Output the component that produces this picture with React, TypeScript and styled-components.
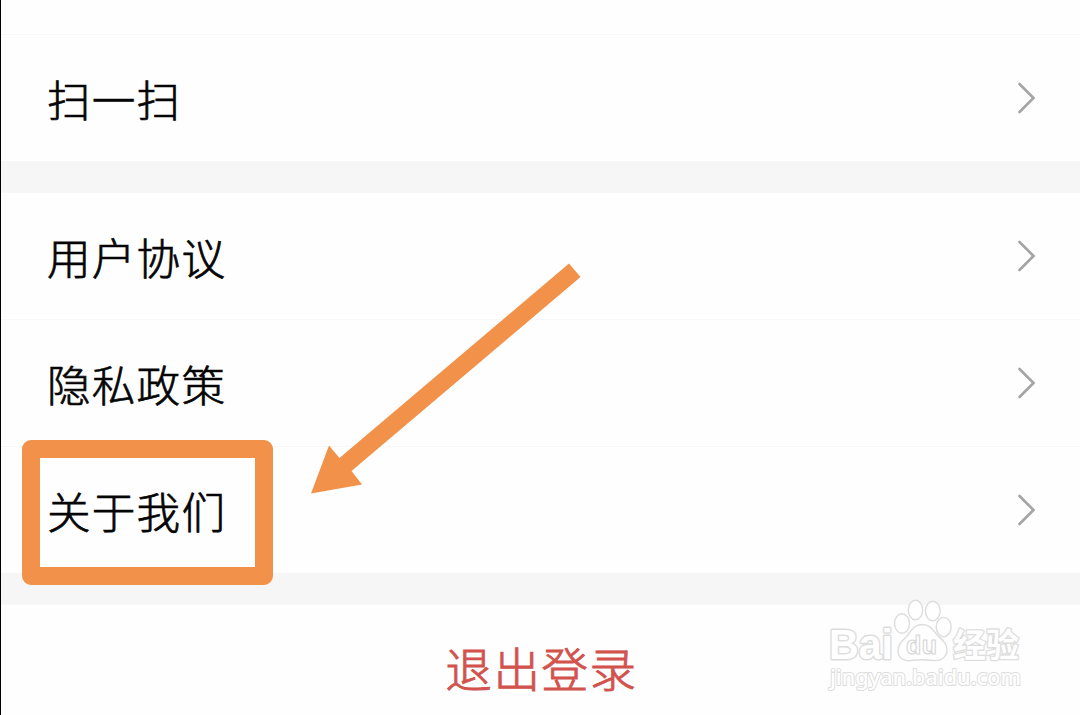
import React, { FC } from "react";
import styled, { createGlobalStyle } from "styled-components";

const GlobalStyle = createGlobalStyle`
  body {
    margin: 0;
    background: #fefefe;
    overflow: hidden;
  }
`;

const Page = styled.div`
  position: relative;
  box-sizing: border-box;
  width: 1080px;
  height: 715px;
  padding-top: 34px;
  overflow: hidden;
  border-left: 1px solid #000000;
  background: #fefefe;
  font-family: "Noto Sans CJK SC", sans-serif;
  font-weight: 300;
`;

const Group = styled.div`
  border-bottom: 32px solid #f6f6f6;
`;

const Row = styled.div<{ divider?: boolean; height: number }>(
  props => `
  box-sizing: border-box;
  display: flex;
  align-items: center;
  justify-content: space-between;
  height: ${props.height}px;
  padding: 0 44px 0 46px;
  border-top: ${props.divider ? "1px solid #f7f7f7" : "none"};
`
);

const Label = styled.span`
  font-size: 43.6px;
  line-height: 60px;
  letter-spacing: 1.2px;
  color: #050505;
  -webkit-text-stroke: 0.7px #050505;
`;

const Logout = styled.div`
  display: flex;
  justify-content: center;
  padding: 29px 0 0 2px;
  font-size: 46.5px;
  line-height: 66px;
  letter-spacing: 1.6px;
  color: #d2534d;
  -webkit-text-stroke: 0.9px #d2534d;
`;

const Highlight = styled.div`
  position: absolute;
  left: 21px;
  top: 440px;
  box-sizing: border-box;
  width: 251px;
  height: 145px;
  border: 18px solid #f29149;
  border-radius: 9px;
`;

const Arrow = styled.svg`
  position: absolute;
  left: 299px;
  top: 250px;
`;

const Watermark = styled.svg`
  position: absolute;
  left: 819px;
  top: 590px;
  fill: #ffffff;
  stroke: #dddddd;
  stroke-width: 1.4px;
  stroke-linejoin: round;
`;

const Brand = styled.text`
  font-family: "Liberation Sans", sans-serif;
  font-size: 43px;
  font-weight: 700;
  stroke-width: 3px;
  paint-order: stroke;
`;

const BrandSuffix = styled(Brand)`
  font-family: "Noto Sans CJK SC", sans-serif;
  font-size: 33px;
  stroke-width: 2.6px;
`;

const PawText = styled.text`
  font-family: "Liberation Sans", sans-serif;
  font-size: 25px;
  font-weight: 700;
  stroke: #d6d6d6;
  stroke-width: 1.1px;
`;

const Site = styled.text`
  font-family: "Noto Sans", sans-serif;
  font-size: 22.5px;
  font-weight: 500;
  stroke-width: 2px;
  paint-order: stroke;
`;

const Chevron: FC = () => (
  <svg width="20" height="34" viewBox="0 0 20 34" fill="none">
    <path
      d="M3.5 3L17.5 17L3.5 31"
      stroke="#a5a5a5"
      strokeWidth="2.7"
      strokeLinecap="round"
    />
  </svg>
);

const Item: FC<{ label: string; divider?: boolean; height?: number }> = ({
  label,
  divider,
  height = 127
}) => (
  <Row divider={divider} height={height}>
    <Label>{label}</Label>
    <Chevron />
  </Row>
);

const PawLogo: FC = () => (
  <Watermark width="220" height="115" viewBox="0 0 220 115">
    <Brand x="9" y="69" textLength="64" lengthAdjust="spacingAndGlyphs">
      Bai
    </Brand>
    <BrandSuffix x="133" y="67" textLength="66">
      经验
    </BrandSuffix>
    <ellipse cx="82" cy="33.5" rx="7.5" ry="9.7" />
    <ellipse cx="95.5" cy="20" rx="7.2" ry="9.8" />
    <ellipse cx="112.8" cy="21" rx="7.4" ry="9.7" />
    <ellipse cx="123.7" cy="37" rx="7.5" ry="9.6" />
    <path d="M102 34.5C94 34.5 91 41 87 46C82 51 78 54 78 61C78 68 84 71.5 91 70.5C98 69.5 106 69.5 113 70.5C121 71.5 127 67 127 60C127 53 122 50 117.5 45.5C113 40 110 34.5 102 34.5Z" />
    <PawText x="86" y="64" textLength="31">
      du
    </PawText>
    <Site x="10" y="95" textLength="191" lengthAdjust="spacingAndGlyphs">
      jingyan.baidu.com
    </Site>
  </Watermark>
);

const App: FC = () => (
  <>
    <GlobalStyle />
    <Page>
      <Group>
        <Item label="扫一扫" divider />
      </Group>
      <Group>
        <Item label="用户协议" height={126} />
        <Item label="隐私政策" divider />
        <Item label="关于我们" divider />
      </Group>
      <Logout>退出登录</Logout>
      <Highlight />
      <Arrow width="290" height="250" viewBox="0 0 290 250">
        <path
          d="M269 13.5L280.5 27L51.5 221L62 234.5L11 243.5L29 195.5L39.5 208Z"
          fill="#f29149"
        />
      </Arrow>
      <PawLogo />
    </Page>
  </>
);

export default App;
